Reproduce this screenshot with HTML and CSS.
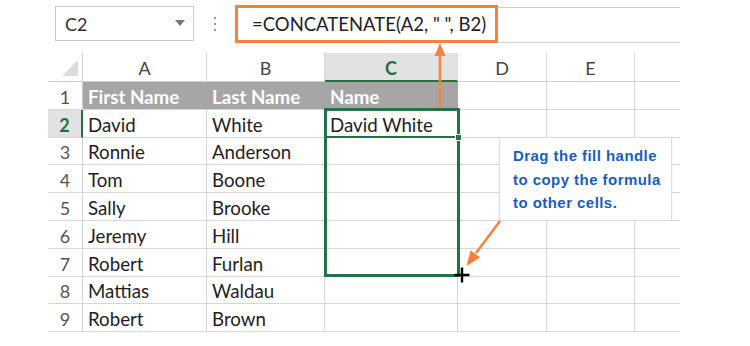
FILE: index.html
```html
<!DOCTYPE html>
<html>
<head>
<meta charset="utf-8">
<link rel="stylesheet" href="styles.css">
</head>
<body>
<div class="page">
  <div class="fbar">
    <div class="namebox"><span>C2</span><span class="tri"></span></div>
    <div class="dots"><i></i><i></i><i></i></div>
    <div class="formula">
      <div class="fbox">=CONCATENATE(A2, " ", B2)</div>
      <div class="fline"></div>
    </div>
  </div>
  <div class="sheet">
    <div class="grid">
      <div class="ch corner"><span class="ctri"></span></div>
      <div class="ch">A</div>
      <div class="ch">B</div>
      <div class="ch sel">C</div>
      <div class="ch">D</div>
      <div class="ch">E</div>
      <div class="ch last"></div>

      <div class="rh">1</div>
      <div class="c hd">First Name</div>
      <div class="c hd">Last Name</div>
      <div class="c hd">Name</div>
      <div class="c"></div><div class="c"></div><div class="c last"></div>

      <div class="rh sel">2</div>
      <div class="c">David</div>
      <div class="c">White</div>
      <div class="c">David White</div>
      <div class="c"></div><div class="c"></div><div class="c last"></div>

      <div class="rh">3</div>
      <div class="c">Ronnie</div>
      <div class="c">Anderson</div>
      <div class="c"></div><div class="c"></div><div class="c"></div><div class="c last"></div>

      <div class="rh">4</div>
      <div class="c">Tom</div>
      <div class="c">Boone</div>
      <div class="c"></div><div class="c"></div><div class="c"></div><div class="c last"></div>

      <div class="rh">5</div>
      <div class="c">Sally</div>
      <div class="c">Brooke</div>
      <div class="c"></div><div class="c"></div><div class="c"></div><div class="c last"></div>

      <div class="rh">6</div>
      <div class="c">Jeremy</div>
      <div class="c">Hill</div>
      <div class="c"></div><div class="c"></div><div class="c"></div><div class="c last"></div>

      <div class="rh">7</div>
      <div class="c">Robert</div>
      <div class="c">Furlan</div>
      <div class="c"></div><div class="c"></div><div class="c"></div><div class="c last"></div>

      <div class="rh">8</div>
      <div class="c">Mattias</div>
      <div class="c">Waldau</div>
      <div class="c"></div><div class="c"></div><div class="c"></div><div class="c last"></div>

      <div class="rh">9</div>
      <div class="c">Robert</div>
      <div class="c">Brown</div>
      <div class="c"></div><div class="c"></div><div class="c"></div><div class="c last"></div>
    </div>
  </div>

  <div class="selection"></div>
  <div class="activeline"></div>
  <div class="handle"></div>
  <div class="callout">Drag the fill handle<br>to copy the formula<br>to other cells.</div>
  <svg class="arrows" width="750" height="346" viewBox="0 0 750 346">
    <line x1="440" y1="108" x2="440" y2="54" stroke="#f4833f" stroke-width="2.5"/>
    <polygon points="440,43 434.5,56 445.5,56" fill="#f4833f"/>
    <line x1="500" y1="221" x2="476" y2="253" stroke="#f4833f" stroke-width="2.5"/>
    <polygon points="466.5,266 470.6,250.2 480.2,257.4" fill="#f4833f"/>
    <path d="M462 267.5 V282.5 M454.5 275 H469.5" stroke="#000" stroke-width="2.4"/>
  </svg>
</div>
</body>
</html>
```
FILE: styles.css
```css
* { box-sizing: border-box; margin: 0; padding: 0; }
html, body { width: 750px; height: 346px; background: #fff; overflow: hidden; }
body { font-family: "Lato", "Liberation Sans", sans-serif; color: #222; }
.page { position: relative; width: 750px; height: 346px; }

.fbar { display: flex; align-items: flex-start; padding: 6px 0 0 55px; height: 53px; }
.namebox { width: 139px; height: 35px; border: 1px solid #c8c8c8; display: flex; align-items: center; justify-content: space-between; padding: 0 8px 0 9px; font-size: 18px; color: #333; }
.tri { width: 0; height: 0; border-left: 5px solid transparent; border-right: 5px solid transparent; border-top: 6px solid #777; margin-top: -1px; }
.dots { width: 41px; height: 35px; display: flex; flex-direction: column; align-items: center; justify-content: center; gap: 4px; }
.dots i { display: block; width: 2px; height: 2px; background: #999; }
.formula { display: flex; align-items: flex-start; }
.fbox { width: 263px; height: 38px; margin-top: -1px; border: 3px solid #f4833f; font-size: 18.5px; color: #222; padding: 5px 0 0 14px; background: #fff; }
.fline { width: 182px; height: 36px; margin-top: 1px; border-top: 1px solid #cfcfcf; border-bottom: 1px solid #cfcfcf; }

.sheet { padding-left: 48px; }
.grid { display: grid; grid-template-columns: 35px 124px 118px 133px 89px 88px 45px; grid-template-rows: 29px repeat(9, 27.8px); }
.ch { border-right: 1px solid #dadada; border-bottom: 1px solid #cfcfcf; display: flex; align-items: center; justify-content: center; font-size: 18px; color: #444; padding-top: 2px; }
.ch.corner { position: relative; border-right: 1px solid #cfcfcf; }
.ctri { position: absolute; right: 4px; bottom: 5px; width: 0; height: 0; border-left: 16px solid transparent; border-bottom: 16px solid #dcdcdc; }
.ch.sel { background: #e2e2e2; color: #217346; font-weight: 700; border-bottom: 2px solid #217346; }
.ch.last, .c.last { border-right: none; }
.rh { border-right: 1px solid #cfcfcf; border-bottom: 1px solid #d6d6d6; display: flex; align-items: center; justify-content: center; font-size: 18px; color: #555; padding-top: 3px; }
.rh.sel { background: #e2e2e2; color: #217346; font-weight: 700; border-right: 2px solid #217346; }
.c { border-right: 1px solid #d6d6d6; border-bottom: 1px solid #d6d6d6; display: flex; align-items: center; padding: 3px 0 0 5px; font-size: 18.7px; color: #1e1e1e; white-space: nowrap; }
.c.hd { background: #a6a6a6; color: #fff; font-weight: 700; border-right-color: #a6a6a6; }

.selection { position: absolute; left: 324px; top: 108px; width: 136px; height: 169px; border: 3px solid #217346; }
.activeline { position: absolute; left: 324px; top: 136px; width: 135px; height: 2px; background: #217346; }
.handle { position: absolute; left: 455px; top: 134px; width: 7px; height: 7px; background: #217346; border: 1px solid #fff; }
.callout { position: absolute; left: 499px; top: 137px; width: 173px; height: 84px; background: #fff; border: 1px solid #dcdcdc; box-shadow: 0 0 2px rgba(0,0,0,0.08); padding: 6px 0 0 13px; font-family: "Liberation Sans", Arial, sans-serif; font-weight: 700; font-size: 15px; letter-spacing: 0.45px; line-height: 23.5px; color: #1a5dbf; }
.arrows { position: absolute; left: 0; top: 0; pointer-events: none; }
```
